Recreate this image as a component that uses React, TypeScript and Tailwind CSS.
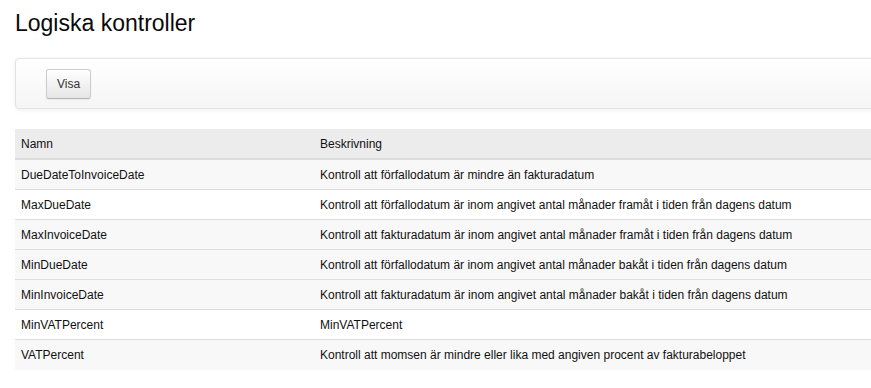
const rows: { name: string; desc: string }[] = [
  { name: 'DueDateToInvoiceDate', desc: 'Kontroll att förfallodatum är mindre än fakturadatum' },
  { name: 'MaxDueDate', desc: 'Kontroll att förfallodatum är inom angivet antal månader framåt i tiden från dagens datum' },
  { name: 'MaxInvoiceDate', desc: 'Kontroll att fakturadatum är inom angivet antal månader framåt i tiden från dagens datum' },
  { name: 'MinDueDate', desc: 'Kontroll att förfallodatum är inom angivet antal månader bakåt i tiden från dagens datum' },
  { name: 'MinInvoiceDate', desc: 'Kontroll att fakturadatum är inom angivet antal månader bakåt i tiden från dagens datum' },
  { name: 'MinVATPercent', desc: 'MinVATPercent' },
  { name: 'VATPercent', desc: 'Kontroll att momsen är mindre eller lika med angiven procent av fakturabeloppet' },
];

// rows 2 and 6 render without the zebra tint
const plainRows = [1, 5];

function App() {
  return (
    <div className="min-h-screen w-full overflow-hidden bg-white font-['Liberation_Sans',Arial,sans-serif] text-[#333]">
      <div className="ml-[15px] w-[900px]">
        <h1 className="mt-[10px] text-[23px] leading-[26px] font-normal text-[#0a0a0a]">Logiska kontroller</h1>

        <div className="mt-[22px] h-[51px] rounded-l-[4px] border border-[#e3e3e3] bg-gradient-to-b from-white to-[#f5f5f5] pl-[30px] pt-[10px] shadow-[0_1px_4px_rgba(0,0,0,0.065)]">
          <button className="h-[30px] w-[45px] rounded-[3px] border border-[#ccc] border-b-[#b3b3b3] bg-gradient-to-b from-white to-[#e6e6e6] text-[12px] text-[#333] shadow-[inset_0_1px_0_rgba(255,255,255,0.2),0_1px_2px_rgba(0,0,0,0.05)]">
            Visa
          </button>
        </div>

        <div className="mt-[20px] text-[12px] text-[#111]">
          <div className="flex h-[31px] items-center border-b-2 border-[#ddd] bg-[#ececec]">
            <div className="w-[299px] pl-[6px]">Namn</div>
            <div className="pl-[6px]">Beskrivning</div>
          </div>
          {rows.map((r, i) => (
            <div
              key={r.name}
              className={`flex h-[30px] items-center ${i < rows.length - 1 ? 'border-b border-[#ddd]' : ''} ${plainRows.includes(i) ? 'bg-white' : 'bg-[#f8f8f8]'}`}
            >
              <div className="w-[299px] pl-[6px]">{r.name}</div>
              <div className="pl-[6px]">{r.desc}</div>
            </div>
          ))}
        </div>
      </div>
    </div>
  );
}

export default App;
